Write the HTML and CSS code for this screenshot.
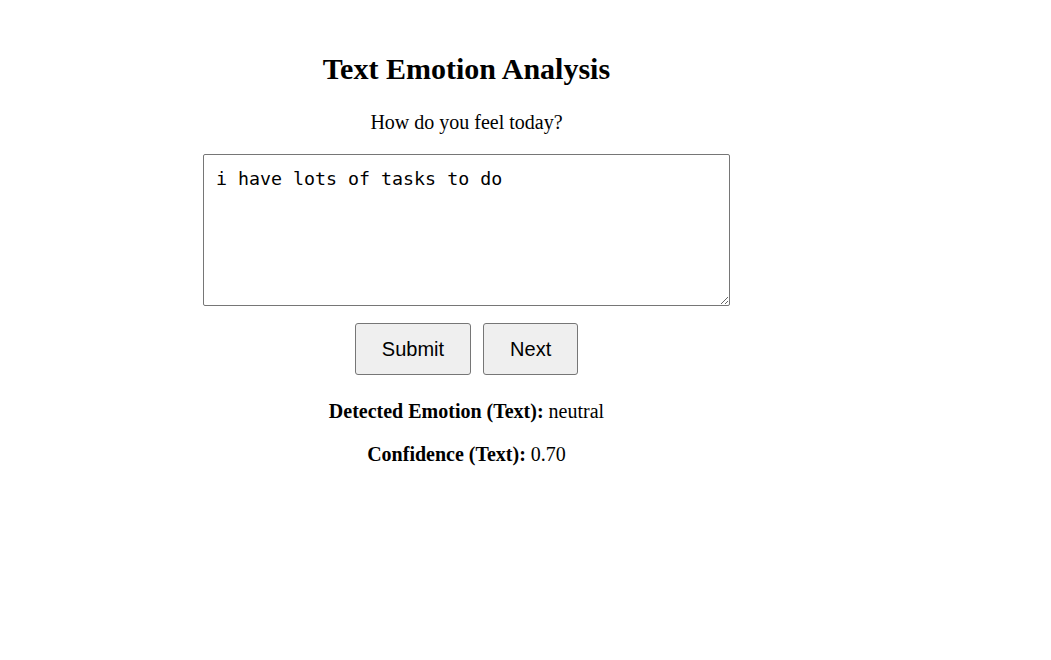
FILE: index.html
```html
<!DOCTYPE html>
<html>
<head>
<meta charset="utf-8">
<link rel="stylesheet" href="styles.css">
</head>
<body>
<div class="app">
  <h1 class="title">Text Emotion Analysis</h1>
  <p class="prompt">How do you feel today?</p>
  <textarea class="input" spellcheck="false">i have lots of tasks to do</textarea>
  <div class="actions">
    <button class="btn">Submit</button>
    <button class="btn">Next</button>
  </div>
  <p class="result"><strong>Detected Emotion (Text):</strong> neutral</p>
  <p class="result"><strong>Confidence (Text):</strong> 0.70</p>
</div>
</body>
</html>
```

FILE: styles.css
```css
html, body { margin: 0; padding: 0; background: #fff; }
body { padding: 8px; font-family: "Liberation Serif", "Times New Roman", serif; color: #000; }
.app {
  width: 917px;
  padding-top: 30px;
  display: flex;
  flex-direction: column;
  align-items: center;
  text-align: center;
}
.title { font-size: 30px; font-weight: bold; margin: 13px 0 0; line-height: 36px; }
.prompt { font-size: 20px; margin: 24px 0 0; line-height: 23px; }
.input {
  box-sizing: border-box;
  width: 527px;
  height: 152px;
  margin-top: 20px;
  padding: 13px 12px 12px;
  border: 1px solid #767676;
  border-radius: 2px;
  font-family: "DejaVu Sans Mono", "Liberation Mono", monospace;
  font-size: 18.3px;
  line-height: 22px;
  color: #000;
  resize: both;
}
.actions { display: flex; gap: 12px; margin-top: 17px; }
.btn {
  font-family: "Liberation Sans", Arial, sans-serif;
  font-size: 20px;
  line-height: 22px;
  padding: 14px 26px;
  border: 1px solid #767676;
  border-radius: 3px;
  background: #efefef;
  color: #000;
}
.result { font-size: 20px; margin: 25px 0 0; line-height: 23px; }
.result + .result { margin-top: 20px; }
```
